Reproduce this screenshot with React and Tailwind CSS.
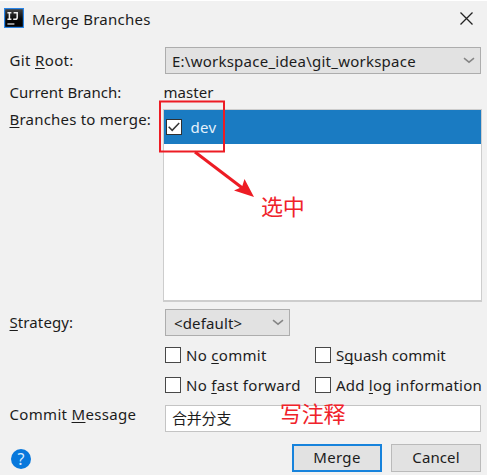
import React from "react";

const U = ({ children }) => (
  <span className="underline decoration-1 underline-offset-2 [text-decoration-skip-ink:none]">{children}</span>
);

const Label = ({ className = "", children }) => (
  <span className={`block w-fit whitespace-pre leading-5 ${className}`}>{children}</span>
);

const Chevron = () => (
  <svg className="h-[7px] w-3 shrink-0" viewBox="0 0 12 7" fill="none" stroke="#858585" strokeWidth="1.5">
    <path d="M1 1.2 6 5.2 11 1.2" />
  </svg>
);

const Box = () => <span className="block size-[16px] shrink-0 border border-[#484848] bg-white" />;

const Check = ({ textClass = "", children }) => (
  <div className="flex h-[30px] items-center gap-[5px]">
    <Box />
    <Label className={textClass}>{children}</Label>
  </div>
);

export default function App() {
  return (
    <div className="relative flex h-[475px] w-[487px] flex-col overflow-hidden border-t border-white bg-[#f1f1f1] font-['Noto_Sans','Noto_Sans_CJK_SC',sans-serif] text-[15px] text-[#1c1c1c]">
      <header className="flex h-[34px] items-center pl-1">
        <svg className="size-5 shrink-0" viewBox="0 0 20 20">
          <defs>
            <linearGradient id="tile" x1="0" y1="0" x2="0" y2="1">
              <stop offset="0" stopColor="#444" />
              <stop offset=".55" stopColor="#080808" />
              <stop offset="1" stopColor="#000" />
            </linearGradient>
          </defs>
          <rect x=".6" y=".6" width="18.8" height="18.8" fill="url(#tile)" stroke="#2b86e8" strokeWidth="1.2" />
          <path d="M3.4 4.8h4M5.4 4.8v6.4M3.4 11.2h4M9.6 4.8h3.6v4.6q0 1.8-1.8 1.8H9.2" fill="none" stroke="#eee" strokeWidth="1.5" />
          <path d="M3.4 16h7" stroke="#ddd" strokeWidth="1.3" />
        </svg>
        <Label className="ml-2 mt-[2px] tracking-[0.25px]">Merge Branches</Label>
        <svg className="ml-auto mr-[14px] size-[13px]" viewBox="0 0 13 13" stroke="#222" strokeWidth="1.3">
          <path d="M.5.5l12 12M12.5.5l-12 12" />
        </svg>
      </header>

      <div className="mt-[12px] flex h-[27px] items-center">
        <div className="w-[165px] pb-[2px] pl-[9.5px]"><Label className="tracking-[0.35px]">Git <U>R</U>oot:</Label></div>
        <div className="flex h-[27px] w-[316px] items-center justify-between border border-[#adadad] bg-[#e2e2e2] pl-[6px] pr-[5px]">
          <Label className="tracking-[0.24px]">E:\workspace_idea\git_workspace</Label>
          <Chevron />
        </div>
      </div>

      <div className="mt-[8px] flex h-[20px] items-center">
        <div className="w-[163.5px] pl-[9.5px]"><Label>Current Branch:</Label></div>
        <Label className="tracking-[0.05px]">master</Label>
      </div>

      <div className="mt-[7px] flex h-[193px]">
        <div className="w-[163px] pl-[9.5px]"><Label className="tracking-[0.2px]"><U>B</U>ranches to merge:</Label></div>
        <div className="h-[193px] w-[319px] border-x border-b-2 border-t border-[#cdcdcd] bg-white">
          <div className="flex h-[34px] items-center bg-[#1a7bc2] pl-[2px] text-[#e4f1fb]">
            <svg className="size-[16px] shrink-0" viewBox="0 0 16 16" fill="none">
              <rect x=".5" y=".5" width="15" height="15" fill="#fff" stroke="#303030" />
              <path d="M2.7 7.7 6.2 11.3 13.2 4" stroke="#353535" strokeWidth="1.5" />
            </svg>
            <Label className="ml-[8.5px] tracking-[0.3px]">dev</Label>
          </div>
        </div>
      </div>

      <div className="mt-[7px] flex h-[27px] items-center">
        <div className="w-[165px] pb-[2px] pl-[9.5px]"><Label className="tracking-[0.1px]"><U>S</U>trategy:</Label></div>
        <div className="flex h-[27px] w-[125px] items-center justify-between border border-[#adadad] bg-[#e2e2e2] pl-[8px] pr-[5px]">
          <Label className="tracking-[0.15px]">&lt;default&gt;</Label>
          <Chevron />
        </div>
      </div>

      <div className="ml-[165px] mt-[4px] grid grid-cols-[150px_172px]">
        <Check textClass="tracking-[0.3px]">No <U>c</U>ommit</Check>
        <Check textClass="tracking-[0.05px]">S<U>q</U>uash commit</Check>
        <Check textClass="tracking-[0.3px]">No <U>f</U>ast forward</Check>
        <Check textClass="tracking-[0.23px]">Add <U>l</U>og information</Check>
      </div>

      <div className="mt-[5px] flex h-[27px] items-center">
        <div className="w-[165px] pb-[9px] pl-[9.5px]"><Label className="tracking-[0.32px]">Commit <U>M</U>essage</Label></div>
        <div className="flex h-[27px] w-[316px] items-center border border-[#c4c4c4] bg-white pb-[2px] pl-[6px]">
          <Label className="tracking-[-0.2px]">合并分支</Label>
        </div>
      </div>

      <footer className="mt-[12px] flex h-[28px] items-center">
        <div className="ml-[11px] mt-[2px] flex size-5 items-center justify-center rounded-full bg-[#0878dc] text-[16px] text-[#d8ecff]">
          <span className="leading-5">?</span>
        </div>
        <div className="ml-[261px] flex h-[28px] w-[90px] items-center justify-center border-2 border-[#1783dc] bg-[#e2e2e2] pb-[2px]">
          <Label className="tracking-[0.3px]">Merge</Label>
        </div>
        <div className="ml-[9px] flex h-[28px] w-[90px] items-center justify-center border border-[#bababa] bg-[#e2e2e2] pb-[2px]">
          <Label className="tracking-[0.1px]">Cancel</Label>
        </div>
      </footer>

      <svg className="pointer-events-none absolute left-0 top-[-1px] h-[475px] w-[487px]" viewBox="0 0 487 475" fill="none">
        <rect x="160" y="101.5" width="64" height="50" stroke="#ed1c24" strokeWidth="2" />
        <path d="M195 152 245 190" stroke="#ed1c24" strokeWidth="3" />
        <path d="M254 197 244.500 179 242 187 234 190.500Z" fill="#ed1c24" />
      </svg>
      <span className="absolute left-[261px] top-[188px] whitespace-nowrap font-['Noto_Sans_CJK_SC',sans-serif] text-[22px] font-normal leading-8 tracking-[-0.3px] text-[#f0222a]">选中</span>
      <span className="absolute left-[280px] top-[395px] whitespace-nowrap font-['Noto_Sans_CJK_SC',sans-serif] text-[22px] font-normal leading-8 tracking-[-0.3px] text-[#f0222a]">写注释</span>
    </div>
  );
}
